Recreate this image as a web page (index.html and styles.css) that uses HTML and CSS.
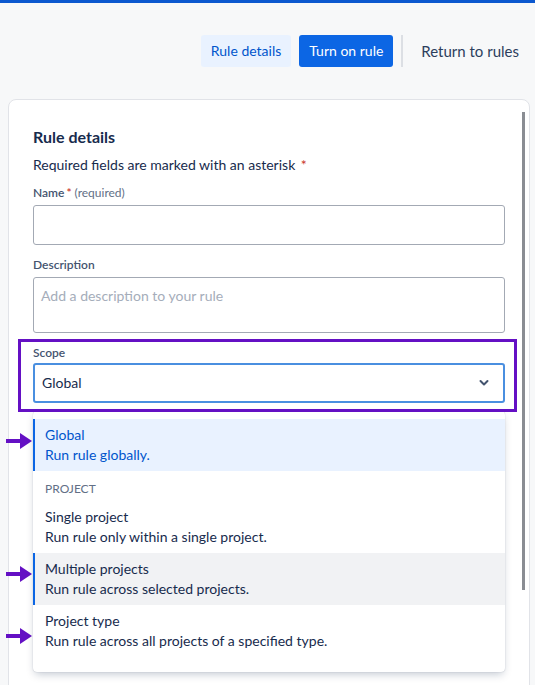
FILE: index.html
```html
<!DOCTYPE html>
<html>
<head>
<meta charset="utf-8">
<link rel="stylesheet" href="styles.css">
</head>
<body>
<div class="topbar"></div>
<header class="actions">
  <button class="btn btn-subtle">Rule details</button>
  <button class="btn btn-primary">Turn on rule</button>
  <span class="divider"></span>
  <button class="btn btn-link">Return to rules</button>
</header>
<main class="card">
  <div class="scrollbar"></div>
  <h2 class="title">Rule details</h2>
  <p class="required-note">Required fields are marked with an asterisk <span class="ast">*</span></p>

  <div class="field field-first">
    <label class="label">Name<span class="ast">*</span> <span class="req">(required)</span></label>
    <div class="input"></div>
  </div>

  <div class="field">
    <label class="label">Description</label>
    <div class="textarea">Add a description to your rule</div>
  </div>

  <div class="field field-scope">
    <div class="annot-box"></div>
    <label class="label">Scope</label>
    <div class="select">
      <span>Global</span>
      <svg class="chev" width="10" height="8" viewBox="0 0 10 8"><path d="M1.5 2 L5 5.5 L8.5 2" fill="none" stroke="#44546f" stroke-width="2" stroke-linecap="round" stroke-linejoin="round"/></svg>
    </div>
    <div class="menu">
      <div class="opt opt-selected">
        <div class="opt-title">Global</div>
        <div class="opt-desc">Run rule globally.</div>
      </div>
      <div class="group">PROJECT</div>
      <div class="opt">
        <div class="opt-title">Single project</div>
        <div class="opt-desc">Run rule only within a single project.</div>
      </div>
      <div class="opt opt-hover">
        <div class="opt-title">Multiple projects</div>
        <div class="opt-desc">Run rule across selected projects.</div>
      </div>
      <div class="opt">
        <div class="opt-title">Project type</div>
        <div class="opt-desc">Run rule across all projects of a specified type.</div>
      </div>
    </div>
  </div>

  <p class="below">When a rule is edited it will be disabled</p>
</main>

<svg class="arrow arrow-1" width="28" height="18" viewBox="0 0 28 18"><path d="M1 7 H15 V1 L27 9 L15 17 V11 H1 Z" fill="#6410c4"/></svg>
<svg class="arrow arrow-2" width="28" height="18" viewBox="0 0 28 18"><path d="M1 7 H15 V1 L27 9 L15 17 V11 H1 Z" fill="#6410c4"/></svg>
<svg class="arrow arrow-3" width="28" height="18" viewBox="0 0 28 18"><path d="M1 7 H15 V1 L27 9 L15 17 V11 H1 Z" fill="#6410c4"/></svg>
</body>
</html>
```

FILE: styles.css
```css
* { box-sizing: border-box; }
html, body { margin: 0; padding: 0; }
body {
  background: #f7f8f9;
  font-family: "Lato", "Noto Sans", sans-serif;
  font-size: 14px;
  line-height: 20px;
  color: #172b4d;
  width: 535px;
  height: 685px;
  overflow: hidden;
  position: relative;
}
.topbar { height: 3px; background: #0b58cf; }

.actions {
  display: flex;
  justify-content: flex-end;
  align-items: center;
  gap: 8px;
  padding: 32px 6px 0 0;
}
.btn {
  font: inherit;
  height: 32px;
  border: 0;
  border-radius: 3px;
  padding: 0 10px;
  line-height: 32px;
  white-space: nowrap;
  cursor: pointer;
}
.btn-subtle { background: #e9f2ff; color: #0055cc; }
.btn-primary { background: #0c66e4; color: #fff; }
.btn-link { background: transparent; color: #2c3e5d; padding: 0 10px; font-size: 15px; }
.divider { width: 2px; height: 32px; background: #dcdfe4; }

.card {
  position: relative;
  margin: 32px 5px 0 8px;
  background: #fff;
  border: 1px solid #e1e3e8;
  border-radius: 8px;
  padding: 27px 24px 40px 24px;
  min-height: 700px;
}
.scrollbar {
  position: absolute;
  right: 4px;
  top: 12px;
  width: 3px;
  height: 478px;
  background: #8a8d93;
}
.title {
  margin: 0;
  font-size: 16px;
  line-height: 20px;
  font-weight: 700;
  color: #172b4d;
}
.required-note { margin: 8px 0 0 0; }
.ast { color: #c9372c; margin-left: 2px; }

.field { margin-top: 12px; }
.field-first { margin-top: 10px; }
.label {
  display: block;
  font-size: 12px;
  line-height: 16px;
  font-weight: 600;
  color: #44546f;
  margin-bottom: 4px;
}
.req { font-weight: 400; color: #626f86; }
.input {
  height: 40px;
  border: 1px solid #a3a9b4;
  border-radius: 3px;
  background: #fff;
}
.textarea {
  height: 56px;
  border: 1px solid #a3a9b4;
  border-radius: 3px;
  padding: 8px 7px;
  color: #a5adba;
}
.field-scope { position: relative; margin-top: 12px; }
.field-scope .label { margin-bottom: 2px; }
.select {
  height: 40px;
  border: 2px solid #4a8fe0;
  border-radius: 3px;
  display: flex;
  align-items: center;
  justify-content: space-between;
  padding: 0 14px 0 7px;
  color: #172b4d;
}
.chev { display: block; }
.annot-box {
  position: absolute;
  top: -6px;
  left: -15px;
  right: -12px;
  bottom: -9px;
  border: 3px solid #6410c4;
  z-index: 3;
  pointer-events: none;
}
.menu {
  position: absolute;
  top: 100%;
  left: 0;
  right: 0;
  margin-top: 8px;
  background: #fff;
  border-radius: 4px;
  box-shadow: 0 4px 8px -2px rgba(9, 30, 66, 0.25), 0 0 1px rgba(9, 30, 66, 0.31);
  padding: 8px 0 15px 0;
  z-index: 2;
}
.opt {
  padding: 6px 12px;
  color: #172b4d;
}
.opt-selected {
  background: #e9f2ff;
  color: #0055cc;
  box-shadow: inset 2px 0 0 #0c66e4;
}
.opt-hover {
  background: #f1f2f4;
  box-shadow: inset 2px 0 0 #0c66e4;
}
.group {
  padding: 10px 12px 4px 12px;
  font-size: 12px;
  line-height: 16px;
  color: #626f86;
}
.below { margin: 278px 0 0 0; }

.arrow { position: absolute; left: 5px; }
.arrow-1 { top: 432px; }
.arrow-2 { top: 565px; }
.arrow-3 { top: 627px; }
```
